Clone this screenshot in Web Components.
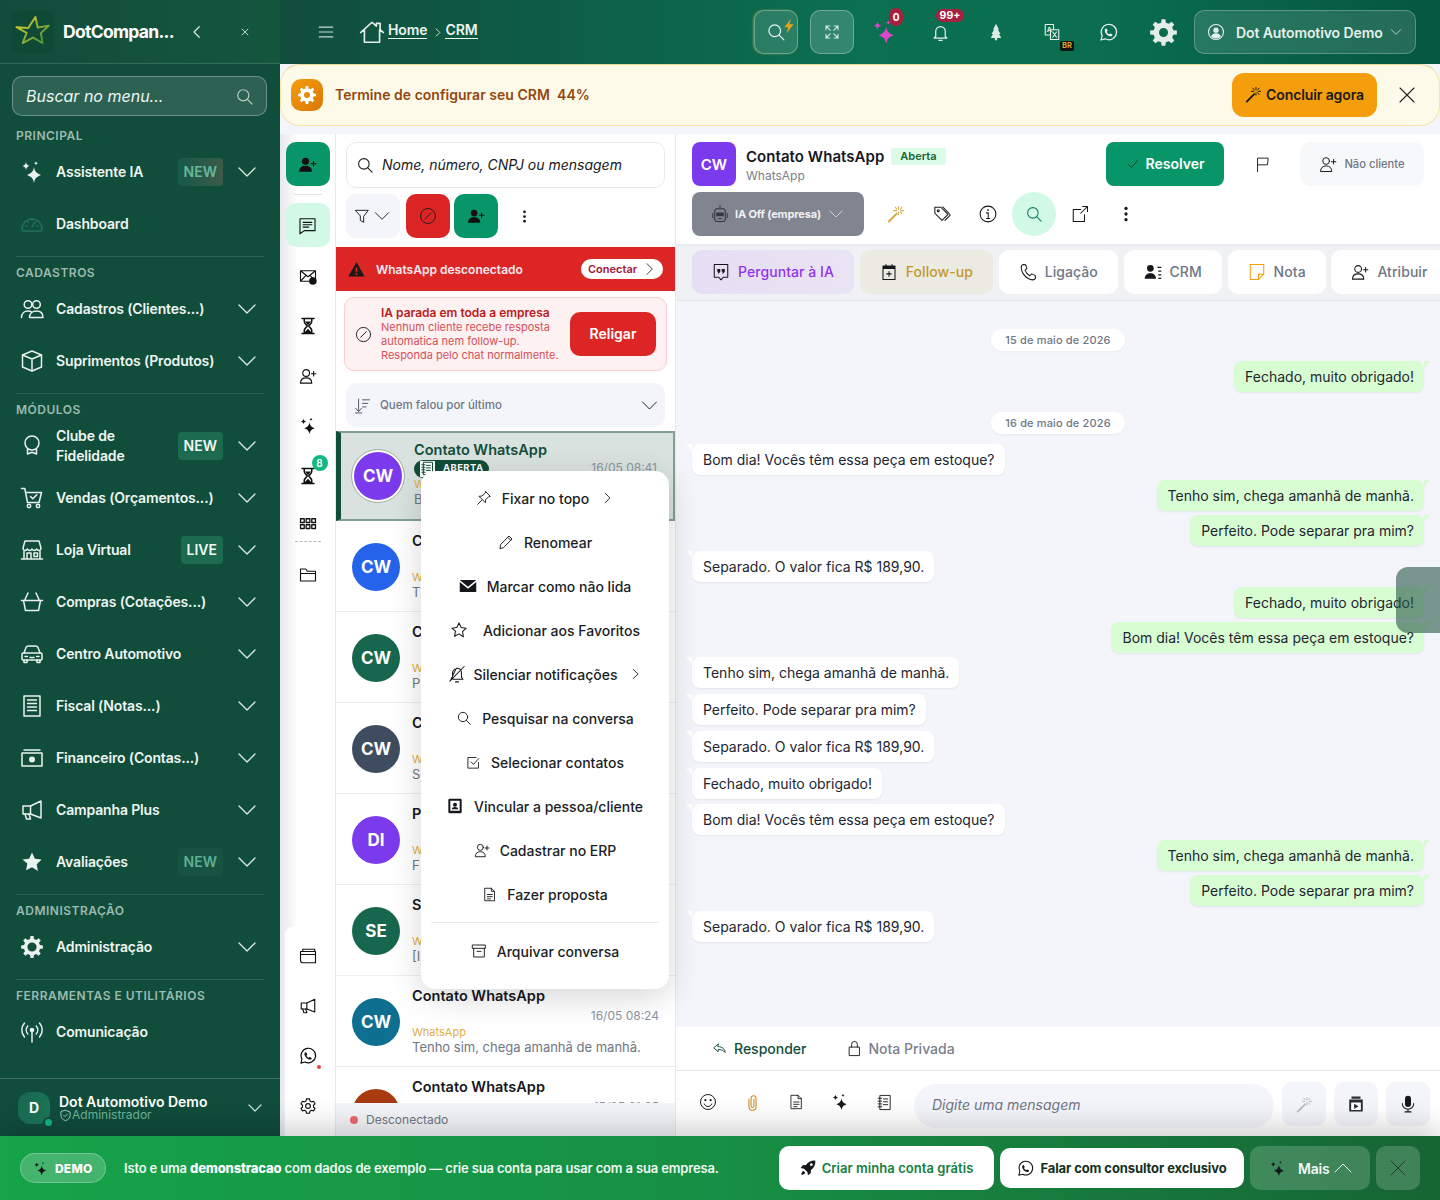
<!DOCTYPE html>
<html lang="pt-BR">
<head>
<meta charset="utf-8">
<title>CRM</title>
<style>
    html, body { margin: 0; padding: 0; background: #f4f5fb; }
    body { font-family: Inter, "Liberation Sans", sans-serif; }
</style>
</head>
<body>
<x-app></x-app>
<script>
// builds a filled cog as one path, with a hole in the middle
const cogPath = (teeth, outer, inner, hole) => {
    let d = "";
    const step = Math.PI * 2 / teeth;
    for (let i = 0; i < teeth; i++) {
        const a = i * step;
        const pts = [[a - step * .3, inner], [a - step * .18, outer], [a + step * .18, outer], [a + step * .3, inner]];
        pts.forEach(([t, r]) => {
            d += (d ? "L" : "M") + (12 + r * Math.cos(t)).toFixed(2) + " " + (12 + r * Math.sin(t)).toFixed(2);
        });
    }
    return d + `zM${12 - hole} 12a${hole} ${hole} 0 1 0 ${hole * 2} 0a${hole} ${hole} 0 1 0 ${-hole * 2} 0z`;
};

const F = 'fill="currentColor" stroke="none"';
const SPARK = `<path ${F} d="M14 7c.8 4.500 2.300 6.200 7 8-4.700 1.800-6.200 3.500-7 8-.8-4.500-2.300-6.200-7-8 4.700-1.800 6.200-3.500 7-8z"/><path ${F} d="M6 2c.4 2.400 1.100 3.200 3.500 4C7.100 6.800 6.400 7.600 6 10c-.4-2.400-1.100-3.200-3.500-4C4.900 5.200 5.600 4.400 6 2z"/><path ${F} d="M16 1c.2 1.300.6 1.700 2 2.200-1.400.5-1.800.9-2 2.200-.2-1.300-.6-1.700-2-2.200 1.400-.5 1.800-.9 2-2.200z"/>`;
const STAR = "M12 2.500l2.900 6.200 6.700.9-4.900 4.700 1.200 6.700L12 17.200l-5.900 3.100 1.200-6.700L2.400 9.600l6.700-.9z";

const ICONS = {
    chevL: '<path d="M15 5l-7 7 7 7"/>',
    chevR: '<path d="M9 4l8 8-8 8"/>',
    chevD: '<path d="M4 8l8 8 8-8"/>',
    chevU: '<path d="M4 16l8-8 8 8"/>',
    check: '<path d="M3 13l6 6L21 5"/>',
    x: '<path d="M5 5l14 14M19 5L5 19"/>',
    search: '<circle cx="10.500" cy="10.500" r="7"/><path d="M15.700 15.700L21.500 21.500"/>',
    spark: SPARK,
    gauge: '<path d="M2 17a10 10 0 1 1 20 0c0 1.500-.6 2-1.500 2h-17C2.600 19 2 18.500 2 17z"/><path d="M12 15l3-5M5.500 14H7M17 14h1.500M7.500 9.500l1 1M12 7v1.500"/>',
    users: '<circle cx="8" cy="7.500" r="3.800"/><circle cx="16.500" cy="7.500" r="3.800"/><path d="M1.500 20.500c0-4 2.800-6.500 6.500-6.500 1.500 0 2.800.4 3.800 1.200M9.500 20.500c0-4 3-6.500 7-6.500s6.500 2.500 6.500 6.500z"/>',
    box: '<path d="M12 2l9.500 4v12L12 22l-9.500-4V6z"/><path d="M2.500 6l9.500 4 9.500-4M12 10v12"/>',
    award: '<circle cx="12" cy="9" r="7"/><path d="M7.500 15.500V20l4.500-1.800L16.500 20v-4.500"/>',
    cart: '<path d="M1.500 2.500h3.300l2.700 14h11.500l2.500-10H6"/><circle cx="9" cy="20" r="1.700"/><circle cx="18" cy="20" r="1.700"/><path d="M10.500 10.500l2.300 2.300 4-4"/>',
    store: '<path d="M3 10L5 3h14l2 7c0 3-3 3-4.500 1-1 2-3.500 2-4.500 0-1 2-3.500 2-4.500 0C6 13 3 13 3 10z"/><path d="M4 13v8h16v-8M1.500 21h21M7 15h4v6H7zM14 15h3.500v3.500H14z"/>',
    basket: '<path d="M1.500 10.500h21M3.500 10.500l2 10h13l2-10M8 3L5 9.500M16 3l3 6.500"/>',
    car: '<path d="M4 11l2-5.500C6.400 4.500 7.500 4 8.500 4h7c1 0 2.100.5 2.500 1.500L20 11"/><path d="M2 12c0-.6.5-1 1-1h18c.5 0 1 .4 1 1v5c0 .6-.5 1-1 1H3c-.5 0-1-.4-1-1z"/><path d="M4 18v2.500h3V18M17 18v2.500h3V18M5 14.500h2.500M16.500 14.500H19M10 15.500h4"/>',
    receipt: '<path d="M4 2h16v20H4z"/><path d="M7.500 6h9M7.500 9.500h9M7.500 13h9M7.500 16.500h9" stroke-width="1.400"/>',
    cash: `<path d="M4 4h16M2 7h20v13H2z"/><circle cx="12" cy="13.500" r="3" ${F}/>`,
    mega: '<path d="M21 3v17l-10.500-4H3V8h7.500z"/><path d="M5 16l1.500 5h4l-1.500-5M10.500 8v8"/>',
    starHalf: `<path ${F} d="${STAR}"/>`,
    cog: `<path ${F} fill-rule="evenodd" d="${cogPath(8, 11, 8.200, 4.600)}"/>`,
    cogFill: `<path ${F} fill-rule="evenodd" d="${cogPath(8, 12, 9, 4)}"/>`,
    cogLine: '<circle cx="12" cy="12" r="3.200"/><path d="M10 2.500h4l.6 2.800 2.100 1.200 2.700-.9 2 3.400-2.100 1.900v2.400l2.100 1.900-2 3.400-2.700-.9-2.100 1.200-.6 2.800h-4l-.6-2.800-2.100-1.200-2.700.9-2-3.400 2.100-1.900v-2.400L2.600 9l2-3.400 2.700.9 2.100-1.200z"/>',
    antenna: `<circle cx="12" cy="10" r="2.300" ${F}/><path d="M12 11v11M7.800 6a6 6 0 0 0 0 8M16.200 6a6 6 0 0 1 0 8M4.500 3a10.500 10.500 0 0 0 0 14M19.500 3a10.500 10.500 0 0 1 0 14"/>`,
    shield: '<path d="M12 2.500l8.500 3v6c0 5-3.500 8.500-8.500 10-5-1.500-8.500-5-8.500-10v-6zM8.500 11.500l2.500 2.500 4.500-4.500"/>',
    menu: '<path d="M3 5.500h18M3 12h18M3 18.500h18"/>',
    home: '<path d="M1.500 12.500L12 3l4 3.600V4h3.500v5.800l3 2.700M5 10v11.500h14V10"/>',
    bolt: `<path ${F} d="M15 1L5 14h6l-2.500 9L19 9.500h-6.500z"/>`,
    expand: '<path d="M4 9V4h5M4 4l5.500 5.500M20 9V4h-5M20 4l-5.500 5.500M4 15v5h5M4 20l5.500-5.500M20 15v5h-5M20 20l-5.500-5.500"/>',
    bell: '<path d="M6 17v-6.500a6 6 0 0 1 12 0V17l2 2H4zM10 22h4"/>',
    tree: `<path ${F} d="M12 1l4 7.500h-1.500l3.500 6h-2l3 5.500h-5.500v3h-3v-3H5l3-5.500H6l3.500-6H8z"/>`,
    translate: `<path d="M3 2h11v14H3z"/><path d="M10 9h11v13H10z" fill="#0a6e4f"/><text x="8.500" y="12" font-size="9" font-weight="700" text-anchor="middle" fill="currentColor" stroke="none" font-family="Inter">A</text><path d="M13 19l5-7M13 12l5 7"/>`,
    whats: `<path d="M2.500 21.500l1.500-5.300A9.700 9.700 0 1 1 7.900 20z"/><path ${F} d="M9 7c-.9 0-1.700 1.100-1.700 2.400 0 3.300 3.900 7.400 7.300 7.400 1.300 0 2.400-.8 2.400-1.800 0-.6-2.200-1.700-2.700-1.700-.4 0-.8.900-1.300.9-1.100 0-2.800-1.800-3-2.900 0-.5.900-.9.900-1.400C10.900 9.700 10 7 9 7z"/>`,
    userCircle: `<circle cx="12" cy="12" r="10"/><circle cx="12" cy="9.500" r="3.500" ${F}/><path ${F} d="M5.500 18c1-3 3.500-4.300 6.500-4.300s5.500 1.300 6.500 4.300c-3.500 3.500-9.500 3.500-13 0z"/>`,
    wand: '<path d="M2.500 22L13 11.500" stroke-width="2.600"/><path d="M15.500 2v3.500M15.500 9.500V13M9 7.500h3.500M18.500 7.500H22M11 3l2 2.500M20 3l-2 2.500M20 12l-2-2.500" stroke-width="1.400"/>',
    userPlus: '<circle cx="9.500" cy="8" r="4.500"/><path d="M2 21.500c0-4.500 3.200-7 7.500-7s7.500 2.500 7.500 7zM19.500 6v6M16.500 9h6"/>',
    userPlusFill: `<circle cx="9.500" cy="8" r="4.500" ${F}/><path ${F} d="M1.500 20c0-4 3.500-6.500 8-6.500s8 2.500 8 6.500v1h-16z"/><path d="M19.500 8v6M16.500 11h6"/>`,
    chat: '<path d="M2.500 3.500h19v15H8l-5.500 4zM6.500 8h11M6.500 11h11M6.500 14h7"/>',
    mailAlert: `<path d="M2 5h20v14H2zM2 5l10 8 10-8M2 19l7-7.500M22 19l-7-7.500"/><circle cx="18.500" cy="18.500" r="5" ${F}/>`,
    hourglass: `<path d="M4 2h16M4 22h16M7 2v4c0 2.500 3 4.500 4 6-1 1.500-4 3.500-4 6v4M17 2v4c0 2.500-3 4.500-4 6 1 1.500 4 3.500 4 6v4" stroke-width="2"/><path ${F} d="M8 6h8l-4 5zM7.500 21.500c0-2.500 2.500-3.500 4.500-6 2 2.500 4.500 3.500 4.500 6z"/>`,
    grid: '<path stroke-width="1.700" d="M2 5h5v5H2zM9.500 5h5v5h-5zM17 5h5v5h-5zM2 13h5v5H2zM9.500 13h5v5h-5zM17 13h5v5h-5z"/>',
    folder: '<path d="M2 20V4h7l2 3h11v13zM2 10h20"/>',
    cards: '<path d="M5 3h16v3H5zM2 6h20v15H5c-2 0-3-1-3-3zM2 10h20"/>',
    filter: '<path d="M2.500 3.500h19L14.500 12.500v9l-5-3v-6z"/>',
    ban: '<circle cx="12" cy="12" r="10"/><path d="M8 16l8-8"/>',
    warn: `<path ${F} fill-rule="evenodd" d="M12 1.500L.5 22h23zM10.800 9h2.400v7h-2.400zM10.800 17.300h2.400v2.400h-2.400z"/>`,
    sort: '<path d="M6.500 3v17M2.500 16l4 4.500 4-4.500M12 4h10M12 9h7.500M12 14h5M2 22.500h9"/>',
    pin: '<path d="M14.500 2.500l7 7-2.500.5-4.500 4.500-.5 4.500-9.500-9.500 4.500-.5L13.500 5zM9 15l-6.500 6.500"/>',
    pencil: '<path d="M3 21.500l1.200-6L16.500 3l4.500 4.500L8.700 20zM14.500 5l4.500 4.500"/>',
    envFill: `<path ${F} d="M1 4h22L12 13zM1 6.500v13.500h22V6.500L12 15.500z"/>`,
    star: `<path d="${STAR}"/>`,
    bellOff: '<path d="M6 16.500V11c0-2.500 1-4.500 3-5.500M11 4.500C15 3.500 18 6.500 18 10.500v6l2 2.500H4zM10 22.500h4M2.500 21.500L21.500 2"/>',
    checkSq: '<path d="M20 12v9H3V4h13M8 11l4 4 8.500-9.500"/>',
    contact: `<path ${F} fill-rule="evenodd" d="M4 1h16c1 0 2 1 2 2v18c0 1-1 2-2 2H4c-1 0-2-1-2-2V3c0-1 1-2 2-2zm1 3v15h14V4zm7 3a3 3 0 1 1 0 6 3 3 0 0 1 0-6zm-5 10c.5-2.500 2.500-3.500 5-3.500s4.500 1 5 3.500z"/>`,
    file: '<path d="M5 2h10l5 5v15H5zM15 2v5h5M8.500 12h8M8.500 15.500h8M8.500 19h5"/>',
    archive: '<path d="M2.500 3h19v5h-19zM4 8v13h16V8M9 12.500h6"/>',
    flag: '<path d="M5 22V3h15l-1 9.500H5"/>',
    robot: `<path d="M12 1v3M5 8a3 3 0 0 1 3-3h8a3 3 0 0 1 3 3v11a3 3 0 0 1-3 3H8a3 3 0 0 1-3-3z"/><path ${F} d="M7 10h10v5H7zM9 17.500h6v1.500H9z"/><path d="M2.500 11v6M21.500 11v6"/>`,
    tags: `<path d="M2.500 3h8l9.500 9.500-8 8L2.500 11z"/><path d="M13 2.500l9 9.500c.8.800.8 1.700 0 2.500l-6 6"/><circle cx="7" cy="7.500" r="1.300"/>`,
    info: `<circle cx="12" cy="12" r="10.500"/><path d="M10 10.500h2.300V18M10 18h4.500"/><circle cx="12" cy="6.800" r="1.200" ${F}/>`,
    external: '<path d="M18 13v9H3V6h10M13 11L22 2M15.500 2H22v6.500"/>',
    kebab: `<circle cx="12" cy="4.500" r="2.200" ${F}/><circle cx="12" cy="12" r="2.200" ${F}/><circle cx="12" cy="19.500" r="2.200" ${F}/>`,
    quote: `<path d="M3 2h18v17h-6l-3 3.500L9 19H3z"/><path ${F} d="M7 8h4v3.500L9 14H7.500l1-2.500H7zM13 8h4v3.500L15 14h-1.500l1-2.500H13z"/>`,
    calendar: `<path d="M4 4h16v18H4z"/><path ${F} d="M4 4h16v4H4z"/><path d="M8 2v3M16 2v3M12 11.500v6M9 14.500h6"/>`,
    phone: '<path d="M5.500 2l3.500.5 1.500 5-2.500 2c1 3 3.500 6 6.500 7.500l2.500-2.500 4.500 2 .5 3.500c-.5 1.500-2.500 2.500-4 2.500C10 22 2.500 13 3 5c.1-1.300 1-2.500 2.500-3z"/>',
    crm: `<circle cx="8.500" cy="7" r="4.500" ${F}/><path ${F} d="M1 21c0-5 3-7.500 7.500-7.500S16 16 16 21zM18 5h5v1.800h-5zM19 10h4v1.800h-4zM19 15h4v1.800h-4zM19 19.500h4v1.800h-4z"/>`,
    sticky: '<path d="M3 2h18v13l-7 7H3zM14 22v-7h7"/>',
    reply: '<path d="M10 5L2.500 11l7.500 6v-3.500c4.500 0 8 1 11 5-.5-5.500-4-9.500-11-9.500z"/>',
    lock: '<path d="M5 10h14v12H5zM8 10V6a4 4 0 0 1 8 0v4"/>',
    smile: `<circle cx="12" cy="12" r="10"/><circle cx="8.500" cy="9.500" r="1.400" ${F}/><circle cx="15.500" cy="9.500" r="1.400" ${F}/><path d="M7 14.500c1 2.500 3 3.500 5 3.500s4-1 5-3.500"/>`,
    clip: '<path d="M7 7v11a5 5 0 0 0 10 0V6a3.500 3.500 0 0 0-7 0v11a1.800 1.800 0 0 0 4 0V7"/>',
    notebook: '<path d="M6 2h14v20H6zM3 6h5M3 10h5M3 14h5M3 18h5M10.500 7h6M10.500 11h6M10.500 15h6"/>',
    video: `<path ${F} d="M6 2h12v3H6zM3 6h18v16H3z"/><path fill="#fff" stroke="none" d="M5.500 10h13v10h-13z"/><path ${F} d="M9.500 11.500l6 3.500-6 3.500z"/>`,
    mic: `<path ${F} d="M8 5a4 4 0 0 1 8 0v7a4 4 0 0 1-8 0z"/><path d="M4.500 11.500a7.500 7.500 0 0 0 15 0M12 19v3.500M8 22.500h8"/>`,
    rocket: `<path ${F} fill-rule="evenodd" d="M23 1c-6-.5-10.500 2-14 6.500L4 8 1 12l5 1 5 5 1 5 4-3 .5-5C21 11.500 23.500 7 23 1zm-6 4a2 2 0 1 1 0 4 2 2 0 0 1 0-4zM5 16c-2 1-3 3.500-3 6 2.500 0 5-1 6-3z"/>`
};

const ic = (name, size = 20, color = "currentColor", sw = 1.6) =>
    `<svg width="${size}" height="${size}" viewBox="0 0 24 24" fill="none" stroke="${color}" stroke-width="${sw}" stroke-linecap="round" stroke-linejoin="round" style="color:${color};flex:none;display:block">${ICONS[name]}</svg>`;

class XNavItem extends HTMLElement {
    connectedCallback() {
        const badge = this.getAttribute("badge");
        const tone = this.getAttribute("tone") || "solid";
        const noChev = this.hasAttribute("no-chev");
        const iconColor = this.getAttribute("icon-color") || "#e9f2ee";
        this.attachShadow({ mode: "open" }).innerHTML = `
            <style>
                :host { display: block; }
                .row { height: 52px; display: flex; align-items: center; padding: 0 21px 0 20px; color: #eef5f2; font-size: 14px; font-weight: 600; letter-spacing: -.15px; line-height: 20px; }
                .icon { width: 24px; margin-right: 12px; flex: none; }
                .label { flex: 1; min-width: 0; }
                .badge { height: 28px; padding: 0 6px; border-radius: 4px; display: flex; align-items: center; margin-right: 12px; font-size: 14px; font-weight: 600; letter-spacing: 0; }
                .solid { background: #1c6b50; color: #eef8f4; }
                .dim { background: linear-gradient(90deg, #17594a, #3c5a47); color: #63b89c; }
                .faint { background: #165341; color: #5fad94; }
            </style>
            <div class="row">
                <span class="icon">${ic(this.getAttribute("icon"), 24, iconColor, 1.5)}</span>
                <span class="label"><slot></slot></span>
                ${badge ? `<span class="badge ${tone}">${badge}</span>` : ""}
                ${noChev ? "" : ic("chevD", 24, "#dfeae5", 1.3)}
            </div>
        `;
    }
}

class XNavSection extends HTMLElement {
    connectedCallback() {
        const first = this.hasAttribute("first");
        this.attachShadow({ mode: "open" }).innerHTML = `
            <style>
                :host { display: block; }
                .wrap { padding: ${first ? "0" : "8px"} 0 6px; margin: 0 ${first ? "0" : "16px"}; border-top: ${first ? "0" : "1px solid rgba(255,255,255,.12)"}; }
                h3 { margin: 0 0 2px; font-size: 12px; line-height: 16px; font-weight: 600; letter-spacing: .5px; color: #9cbab0; padding-left: ${first ? "16px" : "0"}; }
                .items { margin: 0 ${first ? "0" : "-16px"}; }
            </style>
            <div class="wrap">
                <h3>${this.getAttribute("title")}</h3>
                <div class="items"><slot></slot></div>
            </div>
        `;
    }
}

class XSidebar extends HTMLElement {
    connectedCallback() {
        this.attachShadow({ mode: "open" }).innerHTML = `
            <style>
                :host { display: flex; flex-direction: column; background: #114d3b; color: #fff; min-height: 0; overflow: hidden; }
                .head { height: 63px; flex: none; display: flex; align-items: center; padding-left: 12px; border-bottom: 1px solid rgba(255,255,255,.14); background: linear-gradient(90deg, #114d3b, #15563f); }
                .logo { width: 42px; height: 42px; border-radius: 6px; background: #0f4a37; display: flex; align-items: center; justify-content: center; flex: none; }
                .brand { margin-left: 9px; width: 120px; font-size: 17.500px; font-weight: 700; letter-spacing: -.7px; white-space: nowrap; }
                .head .back { margin-left: 5px; }
                .head .close { margin-left: 34px; }
                .search { margin: 12px 13px 0 12px; height: 38px; flex: none; border: 1px solid rgba(255,255,255,.3); border-radius: 10px; background: rgba(255,255,255,.12); display: flex; align-items: center; justify-content: space-between; padding: 0 12px 0 13px; font-size: 16px; font-style: italic; color: #eef5f2; }
                .nav { padding-top: 12px; flex: 1; min-height: 0; }
                .user { height: 57px; flex: none; border-top: 1px solid rgba(255,255,255,.2); display: flex; align-items: center; padding: 0 16px 0 18px; }
                .av { width: 32px; height: 32px; border-radius: 12px; background: linear-gradient(135deg, #17664e, #1d7a5c); display: flex; align-items: center; justify-content: center; font-size: 14px; font-weight: 700; position: relative; flex: none; }
                .av i { position: absolute; right: -4px; bottom: -4px; width: 7px; height: 7px; border-radius: 50%; background: #10b981; border: 2px solid #114d3b; }
                .who { margin-left: 9px; flex: 1; }
                .who b { display: block; font-size: 14px; font-weight: 600; line-height: 15px; letter-spacing: 0; }
                .who span { display: flex; align-items: center; gap: 0; font-size: 12px; line-height: 12px; color: #6cb59c; }
            </style>
            <div class="head">
                <div class="logo">
                    <svg width="38" height="38" viewBox="0 0 24 24" fill="none" stroke="url(#g)" stroke-width="1.200" stroke-linejoin="round">
                        <defs><linearGradient id="g" x1="0" y1="0" x2="1" y2="1"><stop offset="0" stop-color="#e8d62a"/><stop offset="1" stop-color="#3f8f3c"/></linearGradient></defs>
                        <path d="M13.500 2.500l1.500 6.700 7-1.200-5 4.700 1 6.300-6-3.500-6.500 3.500 2.500-6.500L1.500 9l7.500.5z"/>
                    </svg>
                </div>
                <div class="brand">DotCompan...</div>
                <span class="back">${ic("chevL", 18, "#dfeae5", 1.6)}</span>
                <span class="close">${ic("x", 10, "#e6efeb", 2)}</span>
            </div>
            <div class="search"><span>Buscar no menu...</span>${ic("search", 19, "#b7ccc4", 1.5)}</div>
            <div class="nav">
                <x-nav-section first title="PRINCIPAL">
                    <x-nav-item icon="spark" badge="NEW" tone="dim">Assistente IA</x-nav-item>
                    <x-nav-item icon="gauge" no-chev icon-color="#21705a">Dashboard</x-nav-item>
                </x-nav-section>
                <x-nav-section title="CADASTROS">
                    <x-nav-item icon="users">Cadastros (Clientes...)</x-nav-item>
                    <x-nav-item icon="box">Suprimentos (Produtos)</x-nav-item>
                </x-nav-section>
                <x-nav-section title="MÓDULOS">
                    <x-nav-item icon="award" badge="NEW">Clube de<br>Fidelidade</x-nav-item>
                    <x-nav-item icon="cart">Vendas (Orçamentos...)</x-nav-item>
                    <x-nav-item icon="store" badge="LIVE">Loja Virtual</x-nav-item>
                    <x-nav-item icon="basket">Compras (Cotações...)</x-nav-item>
                    <x-nav-item icon="car">Centro Automotivo</x-nav-item>
                    <x-nav-item icon="receipt">Fiscal (Notas...)</x-nav-item>
                    <x-nav-item icon="cash">Financeiro (Contas...)</x-nav-item>
                    <x-nav-item icon="mega">Campanha Plus</x-nav-item>
                    <x-nav-item icon="starHalf" badge="NEW" tone="faint">Avaliações</x-nav-item>
                </x-nav-section>
                <x-nav-section title="ADMINISTRAÇÃO">
                    <x-nav-item icon="cog">Administração</x-nav-item>
                </x-nav-section>
                <x-nav-section title="FERRAMENTAS E UTILITÁRIOS">
                    <x-nav-item icon="antenna" no-chev>Comunicação</x-nav-item>
                </x-nav-section>
            </div>
            <div class="user">
                <div class="av">D<i></i></div>
                <div class="who">
                    <b>Dot Automotivo Demo</b>
                    <span>${ic("shield", 13, "#a6cfc0", 1.8)}Administrador</span>
                </div>
                ${ic("chevD", 18, "#cfe0da", 1.6)}
            </div>
        `;
    }
}

class XTopbar extends HTMLElement {
    connectedCallback() {
        this.attachShadow({ mode: "open" }).innerHTML = `
            <style>
                :host { display: flex; align-items: center; height: 64px; flex: none; padding: 0 24px 0 37px; background: linear-gradient(90deg, #114d3b 0%, #0a7050 50%, #0a6e4f 70%, #065640 100%); color: #fff; box-sizing: border-box; }
                .crumb { display: flex; align-items: center; margin-left: 24px; font-size: 14px; font-weight: 600; letter-spacing: -.1px; color: #eaf3ef; }
                .crumb a { border-bottom: 1.500px solid #eef5f2; line-height: 16px; margin-top: -3px; }
                .crumb .home { margin-right: 3px; }
                .crumb .sep { margin: 0 2px 0 5px; }
                .spacer { flex: 1; }
                .sq { width: 44px; height: 44px; box-sizing: border-box; border-radius: 10px; display: flex; align-items: center; justify-content: center; position: relative; }
                .s1 { background: rgba(255,255,255,.13); border: 1px solid rgba(255,255,255,.3); box-shadow: -1px 0 2px rgba(230,190,60,.5); }
                .s2 { background: rgba(255,255,255,.17); border: 1px solid rgba(255,255,255,.3); margin-left: 12px; }
                .s1 .bolt { position: absolute; right: 0; top: 7px; }
                .slot { width: 56px; height: 44px; display: flex; align-items: center; justify-content: center; position: relative; }
                .dot { position: absolute; background: #a81f40; color: #fff; font-size: 10.500px; font-weight: 700; line-height: 18px; text-align: center; }
                .br { position: absolute; left: 36px; top: 31px; background: #111; color: #d9a520; font-size: 7.500px; font-weight: 700; line-height: 10px; padding: 0 2px; border-radius: 2px; }
                .user { width: 222px; height: 44px; box-sizing: border-box; margin-left: 4px; border: 1px solid rgba(255,255,255,.25); border-radius: 10px; background: rgba(255,255,255,.12); display: flex; align-items: center; padding: 0 12px; font-size: 14px; font-weight: 600; letter-spacing: -.1px; color: #e6f0ec; }
                .user span { margin: 0 auto 0 11px; }
            </style>
            ${ic("menu", 18, "#c7d8d2", 1.500)}
            <div class="crumb">
                <span class="home">${ic("home", 26, "#e6efeb", 1.500)}</span>
                <a>Home</a><span class="sep">${ic("chevR", 11, "#dfeae5", 2)}</span><a>CRM</a>
            </div>
            <div class="spacer"></div>
            <div class="sq s1">${ic("search", 20, "#e9f2ee", 1.500)}<span class="bolt">${ic("bolt", 16, "#e2a61f")}</span></div>
            <div class="sq s2">${ic("expand", 18, "#d7e7e1", 1.500)}</div>
            <div class="slot" style="margin-left:2px">${ic("spark", 26, "#d946c8")}<span class="dot" style="left:33px;top:-2px;width:14px;height:18px;border-radius:9px;font-size:10px">0</span></div>
            <div class="slot">${ic("bell", 19, "#eaf3ef", 1.500)}<span class="dot" style="left:24px;top:-1px;width:28px;height:13px;line-height:13px;border-radius:7px">99+</span></div>
            <div class="slot">${ic("tree", 18, "#dcebe5")}</div>
            <div class="slot">${ic("translate", 18, "#e6efeb", 1.500)}<span class="br">BR</span></div>
            <div class="slot">${ic("whats", 19, "#eaf3ef", 1.500)}</div>
            <div class="slot" style="width:54px">${ic("cogFill", 27, "#e2ede8")}</div>
            <div class="user">${ic("userCircle", 18, "#e6efeb", 1.500)}<span>Dot Automotivo Demo</span>${ic("chevD", 14, "#cfe0da", 1.500)}</div>
        `;
    }
}

class XSetupBanner extends HTMLElement {
    connectedCallback() {
        this.attachShadow({ mode: "open" }).innerHTML = `
            <style>
                :host { display: flex; align-items: center; height: 62px; flex: none; box-sizing: border-box; padding: 0 20px 0 10px; background: #fefaea; border: 1px solid #f5e5a8; border-radius: 20px; border-top-color: #e8d78f; }
                .cog { width: 32px; height: 32px; border-radius: 10px; background: linear-gradient(135deg, #f59e0b, #d97706); display: flex; align-items: center; justify-content: center; }
                .txt { margin-left: 12px; font-size: 14px; font-weight: 600; color: #92480f; white-space: pre; flex: 1; letter-spacing: .03px; padding-bottom: 1px; }
                .btn { width: 145px; height: 44px; border-radius: 12px; background: #f59e0b; display: flex; align-items: center; justify-content: center; gap: 4px; font-size: 14px; font-weight: 600; color: #1c1917; letter-spacing: -.1px; padding-bottom: 1px; box-sizing: border-box; }
                .close { margin-left: 18px; }
            </style>
            <div class="cog">${ic("cogFill", 18, "#fff")}</div>
            <div class="txt">Termine de configurar seu CRM  44%</div>
            <div class="btn">${ic("wand", 17, "#1c1917", 1.300)}Concluir agora</div>
            <span class="close">${ic("x", 24, "#222", 1.100)}</span>
        `;
    }
}

class XRail extends HTMLElement {
    connectedCallback() {
        const slot = (name, extra = "") => `<div class="slot">${ic(name, 18, "#111", 1.500)}${extra}</div>`;
        this.attachShadow({ mode: "open" }).innerHTML = `
            <style>
                :host { display: flex; flex-direction: column; align-items: center; width: 56px; flex: none; box-sizing: border-box; padding-top: 8px; background: linear-gradient(90deg, #e7e8ea, #fff 18px); border-right: 1px solid #e6e8ee; }
                .btn { width: 44px; height: 44px; border-radius: 10px; display: flex; align-items: center; justify-content: center; flex: none; }
                .add { background: #089669; }
                .hr { width: 28px; height: 1px; background: #dfe3ea; margin: 8px 0; flex: none; }
                .on { background: #d1f9e6; margin-bottom: 4px; }
                .slot { width: 44px; height: 50px; display: flex; align-items: center; justify-content: center; position: relative; flex: none; }
                .count { position: absolute; left: 26px; top: 4px; width: 16px; height: 16px; border-radius: 50%; background: #10b981; color: #fff; font-size: 10px; font-weight: 600; line-height: 16px; text-align: center; }
                .short { height: 46px; }
                .dash { width: 26px; border-top: 1px dashed #bbb; margin: -6px 0 8px; flex: none; }
                .bottom { margin-top: auto; width: 46px; padding: 4px 0 5px; background: #fff; border-radius: 8px 8px 0 0; display: flex; flex-direction: column; align-items: center; }
                .red { position: absolute; left: 31px; top: 34px; width: 4px; height: 4px; border-radius: 50%; background: #ef4444; }
            </style>
            <div class="btn add">${ic("userPlusFill", 19, "#111", 1.400)}</div>
            <div class="hr"></div>
            <div class="btn on">${ic("chat", 19, "#111", 1.400)}</div>
            ${slot("mailAlert")}
            ${slot("hourglass")}
            ${slot("userPlus")}
            ${slot("spark")}
            ${slot("hourglass", '<span class="count">8</span>')}
            <div class="slot short">${ic("grid", 18, "#111", 1.500)}</div>
            <div class="dash"></div>
            ${slot("folder")}
            <div class="bottom">
                ${slot("cards")}
                ${slot("mega")}
                ${slot("whats", '<span class="red"></span>')}
                ${slot("cogLine")}
            </div>
        `;
    }
}

class XContactItem extends HTMLElement {
    connectedCallback() {
        const on = this.hasAttribute("selected");
        this.attachShadow({ mode: "open" }).innerHTML = `
            <style>
                :host { display: block; height: 91px; box-sizing: border-box; position: relative; border-bottom: 1px solid #eaedf2; flex: none; }
                :host([selected]) { height: 90px; border: 2px solid #82a095; border-left: 5px solid #114d3b; background: #d9e2de; }
                .row { display: flex; height: 100%; padding-left: 16px; }
                :host([selected]) .row { padding-left: 11px; }
                .av { width: 48px; height: 48px; border-radius: 50%; flex: none; align-self: center; margin-top: 2px; display: flex; align-items: center; justify-content: center; color: #fff; font-size: 17px; font-weight: 700; background: ${this.getAttribute("color")}; }
                :host([selected]) .av { box-sizing: border-box; width: 52px; height: 52px; border: 2px solid #fff; outline: 1px solid #9fb2ab; margin-top: 0; }
                .body { margin-left: 12px; flex: 1; min-width: 0; padding: 10px 16px 0 0; position: relative; }
                :host([selected]) .body { margin-left: 10px; padding-top: 7px; }
                :host([selected]) .time { margin-top: -2px; }
                .name { font-size: 14.500px; line-height: 20px; font-weight: 600; color: ${on ? "#114d3b" : "#16181d"}; letter-spacing: 0; }
                .time { text-align: right; font-size: 12px; line-height: 20px; color: #8d94a2; height: 20px; }
                .src { font-size: 11px; line-height: 14px; color: #dfae45; margin-top: -1px; }
                .msg { font-size: 13px; line-height: 18px; color: #6f7685; white-space: nowrap; overflow: hidden; margin-top: -1px; }
                .tag { position: absolute; left: 0; top: 27px; width: 75px; height: 18px; border-radius: 9px; background: #114d3b; color: #fff; font-size: 9.500px; font-weight: 700; line-height: 16px; padding-left: 29px; box-sizing: border-box; letter-spacing: .4px; }
                .note { position: absolute; left: 6px; top: 28px; width: 15px; height: 16px; background: #fff; color: #114d3b; }
            </style>
            <div class="row">
                <div class="av">${this.getAttribute("initials")}</div>
                <div class="body">
                    <div class="name"><slot name="name"></slot></div>
                    ${on ? `<div class="tag">ABERTA</div><div class="note">${ic("notebook", 15, "#114d3b", 1.600)}</div>` : ""}
                    <div class="time">${this.getAttribute("time")}</div>
                    <div class="src">WhatsApp</div>
                    <div class="msg"><slot name="msg"></slot></div>
                </div>
            </div>
        `;
    }
}

class XContextMenu extends HTMLElement {
    connectedCallback() {
        // icon, label, has submenu, icon size, gap before the label
        const rows = [
            ["pin", "Fixar no topo", true], ["pencil", "Renomear"], ["envFill", "Marcar como não lida", false, 18],
            ["star", "Adicionar aos Favoritos", false, 18, 15], ["bellOff", "Silenciar notificações", true, 18, 8],
            ["search", "Pesquisar na conversa"], ["checkSq", "Selecionar contatos", false, 15],
            ["contact", "Vincular a pessoa/cliente", false, 16, 11], ["userPlus", "Cadastrar no ERP"], ["file", "Fazer proposta", false, 15]
        ];
        const row = ([name, text, more, size = 16, gap = 10]) => `
            <div class="row">${ic(name, size, "#14171c", 1.400)}<span style="margin-left:${gap}px">${text}</span>${more ? `<span class="more">${ic("chevR", 14, "#14171c", 1.500)}</span>` : ""}</div>`;
        this.attachShadow({ mode: "open" }).innerHTML = `
            <style>
                :host { display: block; position: absolute; left: 85px; top: 337px; width: 248px; height: 518px; box-sizing: border-box; padding: 5px 0; background: #fff; border-radius: 14px; box-shadow: 0 8px 32px rgba(0,0,0,.16); z-index: 5; }
                .row { height: 44px; display: flex; align-items: center; justify-content: center; font-size: 14px; font-weight: 500; color: #1a1e26; white-space: nowrap; }
                .more { margin-left: 11px; }
                .hr { height: 1px; background: #e6e8ec; margin: 6px 10px; }
            </style>
            ${rows.map(row).join("")}
            <div class="hr"></div>
            ${row(["archive", "Arquivar conversa"])}
        `;
    }
}

class XContactList extends HTMLElement {
    connectedCallback() {
        const items = [
            ["CW", "#7c3aed", "16/05 08:41", "Contato WhatsApp", "B", true],
            ["CW", "#2563eb", "", "Contato WhatsApp", "T"],
            ["CW", "#17664e", "", "Contato WhatsApp", "P"],
            ["CW", "#3f4c60", "", "Contato WhatsApp", "S"],
            ["DI", "#7c3aed", "", "P", "F"],
            ["SE", "#17664e", "", "S", "[I"],
            ["CW", "#0f6f91", "16/05 08:24", "Contato WhatsApp", "Tenho sim, chega amanhã de manhã."],
            ["CW", "#a83c10", "15/05 21:05", "Contato WhatsApp", "Bom dia!"]
        ];
        this.attachShadow({ mode: "open" }).innerHTML = `
            <style>
                :host { display: flex; flex-direction: column; width: 340px; flex: none; position: relative; background: #fff; border-right: 1px solid #e6e8ee; box-sizing: border-box; height: 100%; }
                .search { margin: 8px 10px 0; height: 46px; flex: none; box-sizing: border-box; border: 1px solid #e6eaf0; border-radius: 10px; display: flex; align-items: center; gap: 8px; padding: 0 9px 1px; font-size: 14px; font-style: italic; color: #16181d; }
                .tools { margin: 6px 10px 0; height: 44px; flex: none; display: flex; gap: 6px; align-items: center; }
                .tool { height: 44px; width: 44px; border-radius: 10px; display: flex; align-items: center; justify-content: center; gap: 2px; flex: none; }
                .kebab { margin-left: -2px; }
                .alert { margin-top: 9px; height: 44px; flex: none; background: #dc2626; display: flex; align-items: center; padding: 0 12px; font-size: 12px; font-weight: 600; color: #fde8ee; }
                .alert span { margin-left: 11px; flex: 1; }
                .conn { width: 82px; height: 20px; background: #fff; border-radius: 10px; color: #a31438; font-size: 11px; font-weight: 600; display: flex; align-items: center; padding-left: 7px; box-sizing: border-box; gap: 4px; }
                .stop { margin: 6px 8px 0; height: 74px; flex: none; box-sizing: border-box; background: #fef1f1; border: 1px solid #fdcdd0; border-radius: 10px; display: flex; align-items: center; padding: 0 10px 0 10px; }
                .stop .t { margin-left: 9px; flex: 1; font-size: 11px; line-height: 14px; color: #d4505a; }
                .stop b { display: block; font-size: 12px; color: #b91c1c; font-weight: 600; }
                .relig { width: 86px; height: 44px; border-radius: 10px; background: #dc2626; color: #fff; font-size: 14px; font-weight: 600; display: flex; align-items: center; justify-content: center; flex: none; margin-top: -1px; }
                .sort { margin: 12px 10px 0; height: 44px; flex: none; background: #f4f5fb; border-radius: 10px; display: flex; align-items: center; padding: 0 5px 0 8px; font-size: 11.500px; color: #6f7685; font-weight: 500; }
                .sort span { margin-left: 9px; flex: 1; padding-bottom: 1px; }
                .list { margin-top: 4px; flex: 1; min-height: 0; overflow: hidden; }
                .foot { height: 33px; flex: none; background: #f4f5f8; display: flex; align-items: center; padding-left: 14px; gap: 8px; font-size: 12px; color: #6f7685; position: relative; }
                .foot i { width: 8px; height: 8px; border-radius: 50%; background: #ef6a70; }
            </style>
            <div class="search">${ic("search", 18, "#16181d", 1.400)}<span>Nome, número, CNPJ ou mensagem</span></div>
            <div class="tools">
                <div class="tool" style="width:54px;background:#f4f5fb">${ic("filter", 16, "#16181d", 1.400)}${ic("chevD", 20, "#16181d", 1.100)}</div>
                <div class="tool" style="background:#dc2626">${ic("ban", 18, "#1c1917", 1.200)}</div>
                <div class="tool" style="background:#089669;margin-left:-2px">${ic("userPlusFill", 18, "#111", 1.400)}</div>
                <div class="tool kebab">${ic("kebab", 15, "#16181d")}</div>
            </div>
            <div class="alert">${ic("warn", 17, "#1c1917")}<span>WhatsApp desconectado</span><div class="conn">Conectar ${ic("chevR", 16, "#111", 1.200)}</div></div>
            <div class="stop">
                ${ic("ban", 17, "#14171c", 1.300)}
                <div class="t"><b>IA parada em toda a empresa</b>Nenhum cliente recebe resposta<br>automatica nem follow-up.<br>Responda pelo chat normalmente.</div>
                <div class="relig">Religar</div>
            </div>
            <div class="sort">${ic("sort", 17, "#4b5261", 1.300)}<span>Quem falou por último</span>${ic("chevD", 21, "#16181d", 1.100)}</div>
            <div class="list">
                ${items.map(([ini, color, time, name, msg, on]) => `
                    <x-contact-item initials="${ini}" color="${color}" time="${time}" ${on ? "selected" : ""}>
                        <span slot="name">${name}</span><span slot="msg">${msg}</span>
                    </x-contact-item>`).join("")}
            </div>
            <div class="foot"><i></i>Desconectado</div>
            <x-context-menu></x-context-menu>
        `;
    }
}

class XBubble extends HTMLElement {
    connectedCallback() {
        const out = this.hasAttribute("out");
        this.attachShadow({ mode: "open" }).innerHTML = `
            <style>
                :host { display: block; align-self: ${out ? "flex-end" : "flex-start"}; position: relative; box-sizing: border-box; padding: 5px 10px 5px 11px; font-size: 14px; line-height: 21px; color: #1e2530; background: ${out ? "#d9fdd3" : "#fff"}; border-radius: 8px; box-shadow: 0 1px 2px rgba(20,30,50,.07); margin: ${out ? "2px" : "2.875px"} 0; }
                :host::after { content: ""; position: absolute; top: 0; ${out ? "right: -6px" : "left: -6px"}; border-top: 7px solid ${out ? "#d9fdd3" : "#fff"}; border-${out ? "right" : "left"}: 6px solid transparent; }
            </style>
            <slot></slot>
        `;
    }
}

class XChat extends HTMLElement {
    connectedCallback() {
        const tab = (name, color, label, text, bg, iconColor) => `
            <div class="tab" style="background:${bg};color:${text}">${ic(name, 18, iconColor || color, 1.400)}<span>${label}</span></div>`;
        const iconBtn = (name, color = "#16181d", extra = "") => `<div class="ib" style="${extra}">${ic(name, 18, color, 1.400)}</div>`;
        const msgs = [
            ["d", "15 de maio de 2026"],
            ["o", "Fechado, muito obrigado!"],
            ["d", "16 de maio de 2026"],
            ["i", "Bom dia! Vocês têm essa peça em estoque?"],
            ["o", "Tenho sim, chega amanhã de manhã."],
            ["o", "Perfeito. Pode separar pra mim?"],
            ["i", "Separado. O valor fica R$ 189,90."],
            ["o", "Fechado, muito obrigado!"],
            ["o", "Bom dia! Vocês têm essa peça em estoque?"],
            ["i", "Tenho sim, chega amanhã de manhã."],
            ["i", "Perfeito. Pode separar pra mim?"],
            ["i", "Separado. O valor fica R$ 189,90."],
            ["i", "Fechado, muito obrigado!"],
            ["i", "Bom dia! Vocês têm essa peça em estoque?"],
            ["o", "Tenho sim, chega amanhã de manhã."],
            ["o", "Perfeito. Pode separar pra mim?"],
            ["i", "Separado. O valor fica R$ 189,90."]
        ];
        this.attachShadow({ mode: "open" }).innerHTML = `
            <style>
                :host { display: flex; flex-direction: column; flex: 1; min-width: 0; position: relative; height: 100%; overflow: hidden; background: #f4f5fb; }
                .head { height: 110px; flex: none; box-sizing: border-box; background: #fff; padding: 8px 16px; display: flex; flex-direction: column; gap: 6px; box-shadow: 0 1px 3px rgba(0,0,0,.06); position: relative; }
                .r { height: 44px; display: flex; align-items: center; }
                .av { width: 44px; height: 44px; border-radius: 8px; background: #7c3aed; color: #fff; display: flex; align-items: center; justify-content: center; font-size: 15px; font-weight: 600; flex: none; }
                .info { margin-left: 10px; flex: 1; padding-top: 1px; }
                .title { display: flex; align-items: center; gap: 7px; font-size: 15px; font-weight: 600; color: #16181d; line-height: 22px; letter-spacing: .05px; }
                .pill { height: 17px; padding: 0 9px; background: #dcfce7; color: #166534; border-radius: 3px; font-size: 11px; font-weight: 600; line-height: 16px; letter-spacing: 0; margin-top: -1px; }
                .sub { font-size: 12px; line-height: 17px; color: #7a808c; margin-top: -1px; }
                .resolve { width: 118px; height: 44px; box-sizing: border-box; padding: 0 0 1px 2px; border-radius: 8px; background: #089669; color: #fff; display: flex; align-items: center; justify-content: center; gap: 6px; font-size: 14px; font-weight: 600; }
                .flag { width: 76px; display: flex; justify-content: center; }
                .nc { width: 124px; height: 44px; border-radius: 10px; background: #f7f8fa; color: #6f7685; display: flex; align-items: center; justify-content: center; gap: 7px; font-size: 11.200px; font-weight: 500; }
                .ia { width: 172px; height: 44px; border-radius: 8px; background: #80858f; color: #f0f1f3; display: flex; align-items: center; justify-content: center; gap: 6px; font-size: 11px; font-weight: 700; letter-spacing: -.15px; margin-right: 10px; }
                .ib { width: 44px; height: 44px; border-radius: 50%; display: flex; align-items: center; justify-content: center; margin-right: 2px; flex: none; }
                .tabs { height: 57px; flex: none; box-sizing: border-box; background: #eff1f5; border-bottom: 1px solid #e3e6ec; padding: 6px 0 6px 16px; display: flex; gap: 5.750px; overflow: hidden; }
                .tab { height: 44px; box-sizing: border-box; padding: 0 20px 1px; display: flex; align-items: center; gap: 8px; border-radius: 10px; font-size: 14px; font-weight: 500; flex: none; white-space: nowrap; letter-spacing: .06px; }
                .msgs { flex: 1; min-height: 0; padding: 28px 16px 0; display: flex; flex-direction: column; overflow: hidden; }
                .date { align-self: center; margin: 0 0 8px; height: 22px; padding: 0 14px; background: #fff; border-radius: 11px; font-size: 11px; font-weight: 500; line-height: 22px; color: #6f7685; letter-spacing: .15px; box-shadow: 0 1px 2px rgba(20,30,50,.05); }
                .date.next { margin: 18px 0 7px; }
                .handle { position: absolute; right: 0; top: 433px; width: 44px; height: 66px; border-radius: 12px 0 0 12px; background: rgba(36,86,70,.6); display: flex; align-items: center; padding-left: 18px; box-sizing: border-box; z-index: 3; }
                .reply { height: 44px; flex: none; box-sizing: border-box; background: #fff; display: flex; align-items: center; padding-left: 36px; font-size: 14px; font-weight: 500; color: #114d3b; border-bottom: 1px solid #e3e5ea; }
                .reply .n { display: flex; align-items: center; gap: 5px; margin-left: 40px; color: #7a808c; }
                .reply .y { display: flex; align-items: center; gap: 7px; }
                .compose { height: 65px; flex: none; box-sizing: border-box; background: #fff; display: flex; padding: 11px 10px 0; }
                .c { width: 44px; height: 44px; margin-top: -2px; display: flex; align-items: center; justify-content: center; flex: none; }
                .input { width: 360px; height: 44px; margin: 2px 8px 0; border-radius: 22px; background: #f4f5fb; display: flex; align-items: center; padding: 0 0 4px 18px; box-sizing: border-box; font-size: 14px; font-style: italic; color: #6f7685; flex: none; }
                .cb { width: 44px; height: 44px; border-radius: 10px; background: #f4f5fb; display: flex; align-items: center; justify-content: center; margin-right: 8px; flex: none; }
            </style>
            <div class="head">
                <div class="r">
                    <div class="av">CW</div>
                    <div class="info">
                        <div class="title">Contato WhatsApp <span class="pill">Aberta</span></div>
                        <div class="sub">WhatsApp</div>
                    </div>
                    <div class="resolve">${ic("check", 12, "#16301f", 1.800)}Resolver</div>
                    <div class="flag">${ic("flag", 17, "#16181d", 1.300)}</div>
                    <div class="nc">${ic("userPlus", 18, "#16181d", 1.300)}Não cliente</div>
                </div>
                <div class="r">
                    <div class="ia">${ic("robot", 18, "#33363d", 1.400)}IA Off (empresa)${ic("chevD", 18, "#d7d9dd", 1.200)}</div>
                    ${iconBtn("wand", "#d4a640")}
                    ${iconBtn("tags")}
                    ${iconBtn("info")}
                    ${iconBtn("search", "#0d7a5f", "background:#d1f9e6")}
                    ${iconBtn("external")}
                    ${iconBtn("kebab")}
                </div>
            </div>
            <div class="tabs">
                ${tab("quote", "#16181d", "Perguntar à IA", "#9333ea", "linear-gradient(90deg,#e6def4,#e9e4f4)")}
                ${tab("calendar", "#16181d", "Follow-up", "#c2982c", "#ecebe1")}
                ${tab("phone", "#16181d", "Ligação", "#6f7685", "#fff")}
                ${tab("crm", "#16181d", "CRM", "#6f7685", "#fff")}
                ${tab("sticky", "#f59e0b", "Nota", "#6f7685", "#fff")}
                ${tab("userPlus", "#16181d", "Atribuir", "#6f7685", "#fff")}
            </div>
            <div class="msgs">
                ${msgs.map(([kind, text], i) => kind === "d"
                    ? `<div class="date ${i ? "next" : ""}">${text}</div>`
                    : `<x-bubble ${kind === "o" ? "out" : ""}>${text}</x-bubble>`).join("")}
            </div>
            <div class="handle">${ic("chevL", 17, "#6f9a8c", 1.300)}</div>
            <div class="reply">
                <span class="y">${ic("reply", 15, "#114d3b", 1.500)}Responder</span>
                <span class="n">${ic("lock", 17, "#16181d", 1.300)}Nota Privada</span>
            </div>
            <div class="compose">
                <div class="c">${ic("smile", 18, "#16181d", 1.300)}</div>
                <div class="c">${ic("clip", 17, "#d08a1a", 1.500)}</div>
                <div class="c">${ic("file", 16, "#16181d", 1.300)}</div>
                <div class="c">${ic("spark", 18, "#16181d")}</div>
                <div class="c">${ic("notebook", 17, "#16181d", 1.300)}</div>
                <div class="input">Digite uma mensagem</div>
                <div class="cb">${ic("wand", 17, "#b9bcc4", 1.300)}</div>
                <div class="cb">${ic("video", 18, "#2a2d33")}</div>
                <div class="cb">${ic("mic", 18, "#16181d", 1.400)}</div>
            </div>
        `;
    }
}

class XDemoBanner extends HTMLElement {
    connectedCallback() {
        this.attachShadow({ mode: "open" }).innerHTML = `
            <style>
                :host { display: flex; align-items: center; height: 64px; padding: 0 20px; box-sizing: border-box; background: linear-gradient(90deg, #16a34a 0%, #178f44 50%, #166534 100%); color: #fff; position: relative; z-index: 2; box-shadow: 0 -8px 30px rgba(0,0,0,.2); }
                .pill { width: 86px; height: 30px; box-sizing: border-box; border: 1px solid rgba(255,255,255,.25); border-radius: 15px; background: rgba(255,255,255,.2); display: flex; align-items: center; padding-left: 12px; gap: 7px; font-size: 12px; font-weight: 800; letter-spacing: .2px; flex: none; }
                .txt { margin-left: 18px; flex: 1; font-size: 13px; font-weight: 600; letter-spacing: -.16px; color: #eef9f2; white-space: nowrap; }
                .txt b { font-weight: 800; color: #fff; }
                .b { display: flex; align-items: center; justify-content: center; border-radius: 10px; flex: none; font-size: 14px; font-weight: 600; }
                .new { width: 215px; height: 44px; background: #fff; color: #15803d; gap: 6px; font-size: 13px; letter-spacing: .05px; }
                .talk { width: 244px; height: 40px; background: #fff; color: #14301f; gap: 6px; margin-left: 6px; font-size: 13px; font-weight: 700; letter-spacing: -.1px; }
                .more { width: 120px; height: 44px; box-sizing: border-box; padding-left: 19px; justify-content: flex-start; background: rgba(255,255,255,.18); margin-left: 6px; color: #f1f8f3; letter-spacing: -.2px; }
                .more span { margin: 0 1px 0 12px; }
                .x { width: 44px; height: 44px; background: rgba(255,255,255,.18); margin-left: 6px; }
            </style>
            <div class="pill">${ic("spark", 15, "#14171c")}DEMO</div>
            <div class="txt">Isto e uma <b>demonstracao</b> com dados de exemplo — crie sua conta para usar com a sua empresa.</div>
            <div class="b new">${ic("rocket", 16, "#14171c")}Criar minha conta grátis</div>
            <div class="b talk">${ic("whats", 17, "#14171c", 1.500)}Falar com consultor exclusivo</div>
            <div class="b more">${ic("spark", 17, "#14171c")}<span>Mais</span>${ic("chevU", 24, "#e6f0ec", 1)}</div>
            <div class="b x">${ic("x", 24, "#2b3a30", 1)}</div>
        `;
    }
}

class XApp extends HTMLElement {
    connectedCallback() {
        this.attachShadow({ mode: "open" }).innerHTML = `
            <style>
                :host { display: grid; grid-template-columns: 280px 1fr; grid-template-rows: 1136px 64px; height: 1200px; width: 1440px; overflow: hidden; font-family: Inter, "Liberation Sans", sans-serif; background: #f4f5fb; }
                x-demo-banner { grid-column: 1 / 3; }
                main { display: flex; flex-direction: column; min-width: 0; min-height: 0; }
                .work { flex: 1; min-height: 0; margin-top: 8px; display: flex; }
            </style>
            <x-sidebar></x-sidebar>
            <main>
                <x-topbar></x-topbar>
                <x-setup-banner></x-setup-banner>
                <div class="work">
                    <x-rail></x-rail>
                    <x-contact-list></x-contact-list>
                    <x-chat></x-chat>
                </div>
            </main>
            <x-demo-banner></x-demo-banner>
        `;
    }
}

customElements.define("x-nav-item", XNavItem);
customElements.define("x-nav-section", XNavSection);
customElements.define("x-sidebar", XSidebar);
customElements.define("x-topbar", XTopbar);
customElements.define("x-setup-banner", XSetupBanner);
customElements.define("x-rail", XRail);
customElements.define("x-contact-item", XContactItem);
customElements.define("x-context-menu", XContextMenu);
customElements.define("x-contact-list", XContactList);
customElements.define("x-bubble", XBubble);
customElements.define("x-chat", XChat);
customElements.define("x-demo-banner", XDemoBanner);
customElements.define("x-app", XApp);
</script>
</body>
</html>
